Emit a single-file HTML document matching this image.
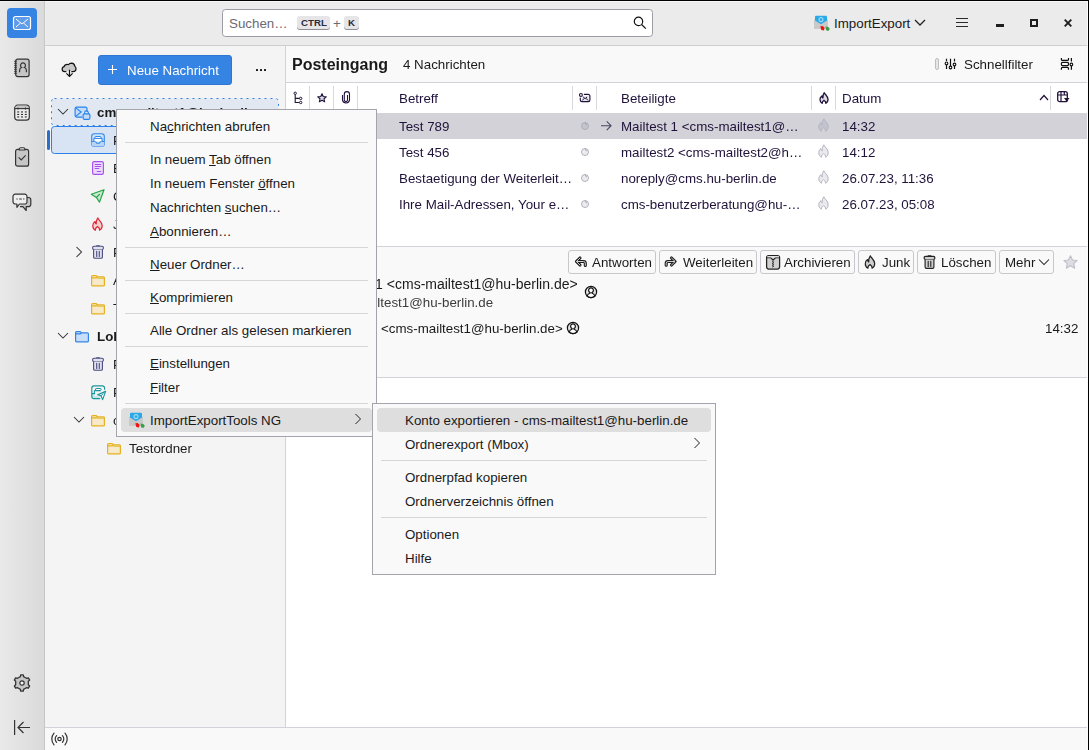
<!DOCTYPE html>
<html><head><meta charset="utf-8">
<style>
*{box-sizing:border-box;margin:0;padding:0}
html,body{width:1089px;height:750px;overflow:hidden;background:#fff}
body{position:relative;font-family:"Liberation Sans",sans-serif;font-size:13.333px;color:#1a1a1a}
.a{position:absolute}
.t{position:absolute;white-space:nowrap;line-height:20px;height:20px;will-change:transform}
.s{will-change:auto}
svg{position:absolute;overflow:visible}
.mi{color:#1a1a1a}
.mi u{text-decoration:underline;text-underline-offset:1px}
.btn{border:1px solid #c8c8cc;border-radius:3px;background:#f9f9f9}
</style></head><body>
<!-- top black line -->
<div class="a" style="left:0;top:0;width:1089px;height:1px;background:#000"></div>

<!-- spaces toolbar -->
<div class="a" id="spaces" style="left:0;top:1px;width:45px;height:749px;background:linear-gradient(to right,#e9e9e9,#dadada);border-right:1px solid #c6c6c6"></div>

<!-- titlebar -->
<div class="a" id="titlebar" style="left:45px;top:1px;width:1044px;height:45px;background:#ebebeb;border-bottom:1px solid #cfcfcf"></div>


<div class="a" style="left:45px;top:1px;width:1042px;height:1px;background:#f7f7f7"></div>
<div class="a" style="left:0;top:1px;width:44px;height:1px;background:rgba(255,255,255,0.35)"></div>
<div class="a" style="left:45px;top:2px;width:1px;height:43px;background:#efefef"></div>
<!-- spaces icons -->
<div class="a" style="left:7px;top:8px;width:30px;height:30px;background:#3584e4;border-radius:4px"></div>
<svg style="left:13px;top:16px" width="18" height="14" viewBox="0 0 18 14"><rect x="0.5" y="0.5" width="17" height="13" rx="2" fill="#5f9ce9" stroke="#fff" stroke-width="1.2"/><path d="M3 3 L9 8 L15 3 M3 11 L7.5 7 M15 11 L10.5 7" stroke="#fff" stroke-width="1" fill="none"/></svg>
<!-- address book -->
<svg style="left:14px;top:58px" width="16" height="20" viewBox="0 0 16 20"><rect x="1.7" y="1.2" width="13.4" height="17.4" rx="2" fill="#c6c6c6" stroke="#333" stroke-width="1.2"/><path d="M0.2 3.3h2.6M0.2 5.3h2.6M0.2 7.3h2.6M0.2 9.3h2.6M0.2 11.3h2.6M0.2 13.3h2.6M0.2 15.3h2.6" stroke="#333" stroke-width="1"/><path d="M5.6 14.3V12.4Q5.6 10.2 7.6 9.5A2.5 2.5 0 1 1 10.4 9.5Q12.4 10.2 12.4 12.4V14.3" fill="none" stroke="#333" stroke-width="1.2"/></svg>
<!-- calendar -->
<svg style="left:14px;top:104px" width="16" height="17" viewBox="0 0 16 17"><rect x="0.7" y="1.2" width="14.6" height="15" rx="3" fill="#ececec" stroke="#333" stroke-width="1.2"/><path d="M1.3 4.4V4a2.4 2.4 0 0 1 2.4-2.4h8.6A2.4 2.4 0 0 1 14.7 4v0.4z" fill="#c6c6c6"/><path d="M0.7 4.6h14.6" stroke="#333" stroke-width="1.1"/><path d="M4 3.6v2M11.5 3.6v2" stroke="#333" stroke-width="1.1"/><g fill="#333"><rect x="3.2" y="7.4" width="2" height="1.1"/><rect x="7" y="7.4" width="2" height="1.1"/><rect x="10.8" y="7.4" width="2" height="1.1"/><rect x="3.2" y="9.9" width="2" height="1.1"/><rect x="7" y="9.9" width="2" height="1.1"/><rect x="10.8" y="9.9" width="2" height="1.1"/><rect x="3.2" y="12.4" width="2" height="1.1"/><rect x="7" y="12.4" width="2" height="1.1"/><rect x="10.8" y="12.4" width="2" height="1.1"/></g></svg>
<!-- tasks -->
<svg style="left:15px;top:147px" width="14" height="20" viewBox="0 0 14 20"><rect x="0.6" y="2.4" width="13" height="16.8" rx="2" fill="#c6c6c6" stroke="#333" stroke-width="1.2"/><path d="M4.3 3V2.3a1.5 1.5 0 0 1 1.5-1.5h2.6a1.5 1.5 0 0 1 1.5 1.5V3z" fill="#e8e8e8" stroke="#333" stroke-width="1.1"/><path d="M3.6 10.3l2.6 2.6 4.4-4.6" fill="none" stroke="#333" stroke-width="1.1"/></svg>
<!-- chat -->
<svg style="left:12px;top:193px" width="20" height="20" viewBox="0 0 20 20"><path d="M11 4.5h5.5a2.3 2.3 0 0 1 2.3 2.3v4.6a2.3 2.3 0 0 1-2.3 2.3h-2.3v3.8l-3.3-3.8H8" fill="#c6c6c6" stroke="#333" stroke-width="1.2" stroke-linejoin="round"/><path d="M3.3 1.2h9.4a2.3 2.3 0 0 1 2.3 2.3v5.2a2.3 2.3 0 0 1-2.3 2.3H7.5L4.9 14.3V11H3.3A2.3 2.3 0 0 1 1 8.7V3.5A2.3 2.3 0 0 1 3.3 1.2z" fill="#efefef" stroke="#333" stroke-width="1.2" stroke-linejoin="round"/><path d="M4.4 6h1.2M7.2 6h2.6M11.2 6h1.2" stroke="#333" stroke-width="1"/></svg>
<!-- settings gear -->
<svg style="left:13px;top:674px" width="18" height="18" viewBox="0 0 18 18"><path d="M5.85 3.54 L7.40 2.60 L7.72 0.90 L10.28 0.90 L10.60 2.60 L12.15 3.54 L13.75 4.42 L15.37 3.84 L16.66 6.06 L15.34 7.18 L15.30 9.00 L15.34 10.82 L16.66 11.94 L15.37 14.16 L13.75 13.58 L12.15 14.46 L10.60 15.40 L10.28 17.10 L7.72 17.10 L7.40 15.40 L5.85 14.46 L4.25 13.58 L2.63 14.16 L1.34 11.94 L2.66 10.82 L2.70 9.00 L2.66 7.18 L1.34 6.06 L2.63 3.84 L4.25 4.42Z" fill="#c6c6c6" stroke="#333" stroke-width="1.3" stroke-linejoin="round"/><circle cx="9" cy="9" r="2.2" fill="#f4f4f4" stroke="#333" stroke-width="1.2"/></svg>
<!-- collapse -->
<svg style="left:14px;top:720px" width="16" height="15" viewBox="0 0 16 15"><path d="M0.6 0v15" stroke="#333" stroke-width="1.2"/><path d="M16 7.5H4M9.5 2L4 7.5 9.5 13" fill="none" stroke="#333" stroke-width="1.2"/></svg>

<!-- search box -->
<div class="a" style="left:222px;top:9px;width:431px;height:28px;background:#fff;border:1px solid #9c9ca6;border-radius:3.5px"></div>
<div class="t s" style="left:229px;top:14px;color:#6a6a72">Suchen…</div>
<div class="a" style="left:297px;top:16px;width:33px;height:13px;background:#e6e6e9;border-radius:3px;box-shadow:0 1px 0 #8e8e96"></div>
<div class="t s" style="left:301px;top:12.5px;font-size:9.7px;font-weight:bold;color:#2a2a3a">CTRL</div>
<div class="t s" style="left:333px;top:14px;color:#6a6a72">+</div>
<div class="a" style="left:344px;top:16px;width:15px;height:13px;background:#e6e6e9;border-radius:3px;box-shadow:0 1px 0 #8e8e96"></div>
<div class="t s" style="left:348px;top:12.5px;font-size:9.7px;font-weight:bold;color:#2a2a3a">K</div>
<svg style="left:633px;top:16px" width="14" height="14" viewBox="0 0 14 14"><circle cx="5.5" cy="5.4" r="4.2" fill="none" stroke="#111" stroke-width="1.2"/><path d="M8.6 8.5l4.2 4.2" stroke="#111" stroke-width="1.2"/></svg>

<!-- app menu / window buttons -->
<svg style="left:814px;top:15px" width="16" height="16" viewBox="0 0 16 16"><path d="M0 4.8L7 1.5 14 4.8V14H0z" fill="#c9c9c9"/><path d="M1 1.8Q1 0.8 2 0.8H12Q13 0.8 13 1.8V5.4L7 9.3 1 5.4z" fill="#2aa9e8"/><circle cx="7" cy="4.6" r="2" fill="none" stroke="#9fd9f6" stroke-width="1.1"/><path d="M6.3 11.2L8.6 10.9 10.5 12.8 10 15.6 7.3 15z" fill="#f21212"/><path d="M11.6 11.4L14.4 12 15.8 13.9 14.3 16 12 15.2z" fill="#3c9e45"/></svg>
<div class="t s" style="left:834px;top:14px;color:#1a1a1a">ImportExport</div>
<svg style="left:914px;top:19px" width="12" height="8" viewBox="0 0 12 8"><path d="M1 1l5 5 5-5" fill="none" stroke="#222" stroke-width="1.3"/></svg>
<svg style="left:956px;top:17px" width="12" height="11" viewBox="0 0 12 11"><path d="M0 1.5h12M0 5.5h12M0 9.5h12" stroke="#2a2a2a" stroke-width="1.1"/></svg>
<div class="a" style="left:996px;top:24px;width:8px;height:3px;background:#1e1e1e"></div>
<div class="a" style="left:1030px;top:19px;width:8px;height:8px;border:2px solid #1e1e1e"></div>
<svg style="left:1064px;top:19px" width="8" height="8" viewBox="0 0 8 8"><path d="M0.7 0.7l6.6 6.6M7.3 0.7l-6.6 6.6" stroke="#1e1e1e" stroke-width="1.9"/></svg>

<!-- folder pane -->
<div class="a" id="folderpane" style="left:45px;top:46px;width:241px;height:681px;background:#f4f4f4;border-right:1px solid #d2d2d8"></div>


<!-- folder pane header -->
<svg style="left:61px;top:62px" width="16" height="16" viewBox="0 0 16 16"><path d="M5.6 9.6H3.6Q1.1 9.6 1.1 7.1Q1.1 5.2 3 4.7Q3.8 2.2 6.4 2.3Q7 2.3 7.5 2.6Q8.6 1.1 10.5 1.1Q13.4 1.2 13.8 4.2Q15 5 15 6.8Q15 9.6 12.1 9.6H10.2" fill="#c8c8c8" stroke="#111" stroke-width="1.2" stroke-linejoin="round"/><path d="M5.6 9.6H10.2" stroke="#f3f3f3" stroke-width="1.3"/><path d="M8.5 7.8V14.3M5.4 11.3L8.5 14.4 11.6 11.3" fill="none" stroke="#111" stroke-width="1.2"/></svg>
<div class="a" style="left:98px;top:55px;width:134px;height:30px;background:#3584e4;border:1px solid #2f76d2;border-radius:3px"></div>
<svg style="left:108px;top:65px" width="9" height="9" viewBox="0 0 9 9"><path d="M4.5 0v9M0 4.5h9" stroke="#fff" stroke-width="1.1"/></svg>
<div class="t" style="left:127px;top:61px;color:#fff">Neue Nachricht</div>
<svg style="left:256px;top:69px" width="10" height="2" viewBox="0 0 10 2"><rect x="0" y="0" width="2" height="2" rx="0.5" fill="#111"/><rect x="4" y="0" width="2" height="2" rx="0.5" fill="#111"/><rect x="8" y="0" width="2" height="2" rx="0.5" fill="#111"/></svg>

<!-- account row -->
<svg style="left:51px;top:98px" width="228" height="28" viewBox="0 0 228 28"><rect x="0.5" y="0.5" width="227" height="27" rx="3" fill="#e2e8f2" stroke="#2c80ea" stroke-width="1" stroke-dasharray="2 4"/></svg>
<svg style="left:57px;top:108px" width="12" height="8" viewBox="0 0 12 8"><path d="M1 1l5 5 5-5" fill="none" stroke="#333" stroke-width="1.05"/></svg>
<svg style="left:74px;top:106px" width="17" height="14" viewBox="0 0 17 14"><path d="M13 6V2.6A1.5 1.5 0 0 0 11.5 1.1H2.6A1.5 1.5 0 0 0 1.1 2.6V9.6A1.5 1.5 0 0 0 2.6 11.1H8.5V6z" fill="#c4dcf8"/><path d="M13 6V2.6A1.5 1.5 0 0 0 11.5 1.1H2.6A1.5 1.5 0 0 0 1.1 2.6V9.6A1.5 1.5 0 0 0 2.6 11.1H8.3" fill="none" stroke="#2382ee" stroke-width="1.15"/><path d="M1.6 1.8L7.2 6 1.6 10.3" fill="none" stroke="#2382ee" stroke-width="1.05"/><rect x="9.1" y="7.9" width="6.8" height="5.4" rx="1.2" fill="#c4dcf8" stroke="#2382ee" stroke-width="1.15"/><path d="M10.7 7.9V6.6A1.8 1.8 0 0 1 14.3 6.6V7.9" fill="none" stroke="#2382ee" stroke-width="1.1"/></svg>
<div class="t" style="left:97px;top:103px;width:173px;overflow:hidden;text-overflow:ellipsis;font-weight:bold;color:#1a1a1a">cms-mailtest1@hu-berlin.de</div>

<!-- inbox row selected -->
<div class="a" style="left:51px;top:126px;width:228px;height:28px;background:#d8e4f3;border:1px solid #2c80ea;border-radius:3.5px"></div>
<div class="a" style="left:47px;top:130px;width:3px;height:20px;background:#2a6fcc;border-radius:1.5px"></div>
<svg style="left:91px;top:133px" width="14" height="14" viewBox="0 0 14 14"><rect x="0.7" y="0.7" width="12.6" height="12.6" rx="2.6" fill="#cfe2f8" stroke="#2f88ea" stroke-width="1.1"/><path d="M0.7 8.5H4.3L5.8 10.2H8.2L9.7 8.5H13.3V10.7A2.6 2.6 0 0 1 10.7 13.3H3.3A2.6 2.6 0 0 1 0.7 10.7z" fill="#b9d5f5"/><path d="M0.7 8.5H4.3L5.8 10.2H8.2L9.7 8.5H13.3" fill="none" stroke="#2f88ea" stroke-width="1.1" stroke-linejoin="round"/><path d="M2.9 8.3V5.9Q2.9 5.4 3.5 5.4H10.5Q11.1 5.4 11.1 5.9V8.3" fill="#fff" stroke="#2f88ea" stroke-width="1.1"/><rect x="4" y="3.5" width="6" height="1.9" rx="0.6" fill="#fff" stroke="#2f88ea" stroke-width="1"/></svg>
<div class="t" style="left:113px;top:131px">Posteingang</div>

<!-- drafts -->
<svg style="left:92px;top:161px" width="12" height="14" viewBox="0 0 12 14"><rect x="0.6" y="0.6" width="10.8" height="12.8" rx="1.6" fill="#eadcfa" stroke="#a64ef2" stroke-width="1.15"/><path d="M3.2 3.5h5.6M3.2 5.5h5.6M3.2 7.5h3.6M5.2 10.5h3.6" stroke="#a64ef2" stroke-width="1" stroke-linecap="round"/></svg>
<div class="t" style="left:113px;top:159px">Entwürfe</div>
<!-- sent -->
<svg style="left:90px;top:188px" width="16" height="16" viewBox="0 0 16 16"><path d="M1.3 6.3L14 1.7 9.5 14.1 6.4 9.5z" fill="#c9e8cf" stroke="#22a447" stroke-width="1.2" stroke-linejoin="round"/><path d="M6.4 9.5L9.5 6.3" stroke="#22a447" stroke-width="1.1" stroke-linecap="round"/></svg>
<div class="t" style="left:113px;top:187px">Gesendet</div>
<!-- junk -->
<svg style="left:92px;top:217px" width="11" height="14" viewBox="0 0 11 14"><path d="M5.8 0.8C6.5 3 10.2 4.8 10.2 8.6C10.2 11 9 12.6 7.6 13.2C7.8 11.5 6.8 10.4 5.5 9.6C4.2 10.4 3.2 11.5 3.4 13.2C2 12.6 0.8 11 0.8 8.8C0.8 6.8 1.8 5.4 3 4.6C3 6 3.5 6.6 4.2 7C4 4.5 4.6 2.5 5.8 0.8Z" fill="#f4cfd2" stroke="#e0222e" stroke-width="1.15" stroke-linejoin="round"/></svg>
<div class="t" style="left:113px;top:215px">Junk</div>
<!-- trash with twisty -->
<svg style="left:75px;top:246px" width="8" height="12" viewBox="0 0 8 12"><path d="M1.5 1l5 5-5 5" fill="none" stroke="#333" stroke-width="1.05"/></svg>
<svg style="left:92px;top:245px" width="12" height="14" viewBox="0 0 12 14"><rect x="1.1" y="0.3" width="3.8" height="1" rx="0.5" fill="#4a4a80" transform="translate(3 0)"/><rect x="0.6" y="1.3" width="10.8" height="3.2" rx="1.4" fill="#e2e2ee" stroke="#4a4a80" stroke-width="1.1"/><path d="M1.6 4.6V12a1.3 1.3 0 0 0 1.3 1.3h6.2a1.3 1.3 0 0 0 1.3-1.3V4.6" fill="#e2e2ee" stroke="#4a4a80" stroke-width="1.1"/><path d="M4.7 6.3v5.2M7.3 6.3v5.2" stroke="#4a4a80" stroke-width="1.1" stroke-linecap="round"/></svg>
<div class="t" style="left:113px;top:243px">Papierkorb</div>
<!-- archive folder -->
<svg style="left:91px;top:275px" width="14" height="11" viewBox="0 0 14 11"><path d="M0.6 1.6a1 1 0 0 1 1-1h3.6l1.2 1.2h6a1 1 0 0 1 1 1v7.1a1 1 0 0 1-1 1H1.6a1 1 0 0 1-1-1z" fill="#f6eacb" stroke="#e6b01e" stroke-width="1.2"/><path d="M0.6 2.9h4.8l1.1-1.1" fill="none" stroke="#e6b01e" stroke-width="1.1"/><path d="M6.5 3.3h6.9" stroke="#e6b01e" stroke-width="0.8"/></svg>
<div class="t" style="left:113px;top:271px">Archiv</div>
<svg style="left:91px;top:303px" width="14" height="11" viewBox="0 0 14 11"><path d="M0.6 1.6a1 1 0 0 1 1-1h3.6l1.2 1.2h6a1 1 0 0 1 1 1v7.1a1 1 0 0 1-1 1H1.6a1 1 0 0 1-1-1z" fill="#f6eacb" stroke="#e6b01e" stroke-width="1.2"/><path d="M0.6 2.9h4.8l1.1-1.1" fill="none" stroke="#e6b01e" stroke-width="1.1"/><path d="M6.5 3.3h6.9" stroke="#e6b01e" stroke-width="0.8"/></svg>
<div class="t" style="left:113px;top:299px">Test</div>
<!-- local folders -->
<svg style="left:57px;top:332px" width="12" height="8" viewBox="0 0 12 8"><path d="M1 1l5 5 5-5" fill="none" stroke="#333" stroke-width="1.05"/></svg>
<svg style="left:75px;top:331px" width="14" height="11" viewBox="0 0 14 11"><path d="M0.6 1.6a1 1 0 0 1 1-1h3.6l1.2 1.2h6a1 1 0 0 1 1 1v7.1a1 1 0 0 1-1 1H1.6a1 1 0 0 1-1-1z" fill="#c8def8" stroke="#3584e4" stroke-width="1.2"/><path d="M0.6 2.9h4.8l1.1-1.1" fill="none" stroke="#3584e4" stroke-width="1.1"/></svg>
<div class="t" style="left:97px;top:327px;font-weight:bold">Lokale Ordner</div>
<svg style="left:92px;top:357px" width="12" height="14" viewBox="0 0 12 14"><rect x="1.1" y="0.3" width="3.8" height="1" rx="0.5" fill="#4a4a80" transform="translate(3 0)"/><rect x="0.6" y="1.3" width="10.8" height="3.2" rx="1.4" fill="#e2e2ee" stroke="#4a4a80" stroke-width="1.1"/><path d="M1.6 4.6V12a1.3 1.3 0 0 0 1.3 1.3h6.2a1.3 1.3 0 0 0 1.3-1.3V4.6" fill="#e2e2ee" stroke="#4a4a80" stroke-width="1.1"/><path d="M4.7 6.3v5.2M7.3 6.3v5.2" stroke="#4a4a80" stroke-width="1.1" stroke-linecap="round"/></svg>
<div class="t" style="left:113px;top:355px">Papierkorb</div>
<svg style="left:91px;top:385px" width="16" height="16" viewBox="0 0 16 16"><path d="M0.8 8.6H3.6V11H8.5L9.5 13.6H3A2.2 2.2 0 0 1 0.8 11.4z" fill="#c8e8ea"/><path d="M13.6 4.7V3A2.2 2.2 0 0 0 11.4 0.8H3A2.2 2.2 0 0 0 0.8 3V11.4A2.2 2.2 0 0 0 3 13.6H9.2" fill="none" stroke="#1a939c" stroke-width="1.15"/><path d="M0.8 8.6H3.4V6.1Q3.4 5.6 4 5.6H9.6" fill="none" stroke="#1a939c" stroke-width="1.1"/><rect x="4.6" y="3.5" width="5.4" height="2" rx="0.5" fill="#fff" stroke="#1a939c" stroke-width="1"/><path d="M14.6 6.4L6.6 9.8 10 10.6 11.6 14.6z" fill="#fff" stroke="#1a939c" stroke-width="1.15" stroke-linejoin="round"/><path d="M10 10.6L12.2 8.7" stroke="#1a939c" stroke-width="1" stroke-linecap="round"/></svg>
<div class="t" style="left:113px;top:383px">Postausgang</div>
<svg style="left:73px;top:416px" width="12" height="8" viewBox="0 0 12 8"><path d="M1 1l5 5 5-5" fill="none" stroke="#333" stroke-width="1.05"/></svg>
<svg style="left:91px;top:415px" width="14" height="11" viewBox="0 0 14 11"><path d="M0.6 1.6a1 1 0 0 1 1-1h3.6l1.2 1.2h6a1 1 0 0 1 1 1v7.1a1 1 0 0 1-1 1H1.6a1 1 0 0 1-1-1z" fill="#f6eacb" stroke="#e6b01e" stroke-width="1.2"/><path d="M0.6 2.9h4.8l1.1-1.1" fill="none" stroke="#e6b01e" stroke-width="1.1"/><path d="M6.5 3.3h6.9" stroke="#e6b01e" stroke-width="0.8"/></svg>
<div class="t" style="left:113px;top:411px">ordner</div>
<svg style="left:107px;top:443px" width="14" height="11" viewBox="0 0 14 11"><path d="M0.6 1.6a1 1 0 0 1 1-1h3.6l1.2 1.2h6a1 1 0 0 1 1 1v7.1a1 1 0 0 1-1 1H1.6a1 1 0 0 1-1-1z" fill="#f6eacb" stroke="#e6b01e" stroke-width="1.2"/><path d="M0.6 2.9h4.8l1.1-1.1" fill="none" stroke="#e6b01e" stroke-width="1.1"/><path d="M6.5 3.3h6.9" stroke="#e6b01e" stroke-width="0.8"/></svg>
<div class="t" style="left:129px;top:439px">Testordner</div>

<!-- message list header -->
<div class="a" style="left:286px;top:46px;width:802px;height:37px;background:#f9f9f9;border-bottom:1px solid #d2d2d8"></div>
<!-- column header + rows -->
<div class="a" style="left:286px;top:83px;width:802px;height:163px;background:#fff"></div>
<div class="a" style="left:286px;top:246px;width:802px;height:1px;background:#d2d2d8"></div>

<!-- message list header content -->
<div class="t" style="left:292px;top:55px;font-size:16px;font-weight:bold;color:#1a1a1a">Posteingang</div>
<div class="t" style="left:403px;top:55px;color:#1a1a1a">4 Nachrichten</div>
<div class="a" style="left:935px;top:58px;width:4px;height:12px;border:1px solid #bdbdbd;border-radius:2px;background:#e6e6e6"></div>
<svg style="left:944px;top:57px" width="13" height="13" viewBox="0 0 13 13"><path d="M2.5 1.8v2.2M2.5 7.7v4.3M6.5 1.8v7.3M10.5 1.8v2.6M10.5 8.7v3.3" stroke="#111" stroke-width="1.2"/><circle cx="2.5" cy="6.4" r="1.35" fill="#f9f9f9" stroke="#111" stroke-width="1.1"/><circle cx="6.5" cy="10.5" r="1.35" fill="#f9f9f9" stroke="#111" stroke-width="1.1"/><circle cx="10.5" cy="7.5" r="1.35" fill="#f9f9f9" stroke="#111" stroke-width="1.1"/></svg>
<div class="t" style="left:964px;top:55px;color:#1a1a1a">Schnellfilter</div>
<svg style="left:1060px;top:57px" width="14" height="14" viewBox="0 0 14 14"><path d="M1.4 1.1v1.3a1 1 0 0 0 1 1h5.1a1 1 0 0 0 1-1V1.1M1.4 12.7v-1.3a1 1 0 0 1 1-1h5.1a1 1 0 0 1 1 1v1.3" fill="none" stroke="#111" stroke-width="1.2"/><rect x="1.4" y="5.4" width="7.1" height="3.2" rx="1" fill="none" stroke="#111" stroke-width="1.2"/><path d="M11.4 1.1v3.3M11.4 8.9v3.8" stroke="#111" stroke-width="1.2"/><circle cx="11.4" cy="7.5" r="1.35" fill="#f9f9f9" stroke="#111" stroke-width="1.1"/></svg>

<!-- column header -->
<svg style="left:293px;top:91px" width="10" height="13" viewBox="0 0 10 13"><path d="M2.2 3.5V11.5H6.5M2.2 7.4H6.5" fill="none" stroke="#20123a" stroke-width="1.1"/><circle cx="2.2" cy="2.3" r="1.2" fill="#fff" stroke="#20123a" stroke-width="1"/><circle cx="7.7" cy="7.4" r="1.2" fill="#fff" stroke="#20123a" stroke-width="1"/><circle cx="7.7" cy="11.5" r="1.2" fill="#fff" stroke="#20123a" stroke-width="1"/></svg>
<div class="a" style="left:309px;top:86px;width:1px;height:24px;background:#d8d8de"></div>
<svg style="left:317px;top:92.5px" width="10" height="10" viewBox="0 0 12 12"><path d="M6 0.8l1.5 3.3 3.6 0.4-2.7 2.4 0.8 3.6L6 8.7 2.8 10.5l0.8-3.6L0.9 4.5l3.6-0.4z" fill="#d8d8e0" stroke="#20123a" stroke-width="1.3" stroke-linejoin="round"/></svg>
<div class="a" style="left:333px;top:86px;width:1px;height:24px;background:#d8d8de"></div>
<svg style="left:342px;top:91px" width="8" height="13" viewBox="0 0 8 13"><path d="M5.5 4v5a1.6 1.6 0 0 1-3.2 0V3.2a2.6 2.6 0 0 1 5.2 0v6a3.6 3.6 0 0 1-7 0V4" fill="none" stroke="#20123a" stroke-width="1.1"/></svg>
<div class="a" style="left:357px;top:86px;width:1px;height:24px;background:#d8d8de"></div>
<div class="t" style="left:399px;top:89px;color:#20123a">Betreff</div>
<div class="a" style="left:572px;top:86px;width:1px;height:24px;background:#d8d8de"></div>
<svg style="left:579px;top:92px" width="12" height="11" viewBox="0 0 12 11"><path d="M3 4.2h6.8v4.6H3z" fill="#e4e4ea"/><path d="M5.3 2.3H9.2A1.7 1.7 0 0 1 10.9 4V7.9A1.7 1.7 0 0 1 9.2 9.6H3A1.7 1.7 0 0 1 1.3 7.9V6" fill="none" stroke="#20123a" stroke-width="1.15" stroke-linecap="round"/><circle cx="1.9" cy="2.9" r="1.45" fill="#fff" stroke="#20123a" stroke-width="1.1"/><path d="M3.5 8.2L5 6.6M8.8 8.2L7.3 6.6M4.4 5.2L6.1 6.6 7.8 5.2" fill="none" stroke="#20123a" stroke-width="1" stroke-linecap="round"/></svg>
<div class="a" style="left:596px;top:86px;width:1px;height:24px;background:#d8d8de"></div>
<div class="t" style="left:621px;top:89px;color:#20123a">Beteiligte</div>
<div class="a" style="left:811px;top:86px;width:1px;height:24px;background:#d8d8de"></div>
<svg style="left:819px;top:92px" width="10" height="12" viewBox="0 0 11 14"><path d="M5.8 0.8C6.5 3 10.2 4.8 10.2 8.6C10.2 11 9 12.6 7.6 13.2C7.8 11.5 6.8 10.4 5.5 9.6C4.2 10.4 3.2 11.5 3.4 13.2C2 12.6 0.8 11 0.8 8.8C0.8 6.8 1.8 5.4 3 4.6C3 6 3.5 6.6 4.2 7C4 4.5 4.6 2.5 5.8 0.8Z" fill="#dcdce2" stroke="#20123a" stroke-width="1.5" stroke-linejoin="round"/></svg>
<div class="a" style="left:835px;top:86px;width:1px;height:24px;background:#d8d8de"></div>
<div class="t" style="left:842px;top:89px;color:#20123a">Datum</div>
<svg style="left:1039px;top:94px" width="10" height="7" viewBox="0 0 10 7"><path d="M1 6l4-4.5 4 4.5" fill="none" stroke="#20123a" stroke-width="1.2"/></svg>
<div class="a" style="left:1050px;top:86px;width:1px;height:24px;background:#d8d8de"></div>
<svg style="left:1057px;top:91px" width="13" height="12" viewBox="0 0 13 12"><rect x="0.7" y="0.7" width="9.6" height="10" rx="2" fill="none" stroke="#20123a" stroke-width="1.3"/><path d="M0.7 4h9.6M4 0.7v10M7.3 0.7v3.3" stroke="#20123a" stroke-width="1.2"/><path d="M7 7h5.5l-2.75 3.8z" fill="#20123a"/></svg>

<!-- rows -->
<div class="a" style="left:286px;top:113px;width:802px;height:26px;background:#d2d2d8"></div>
<div class="t" style="left:399px;top:117px;color:#20123a">Test 789</div>
<svg style="left:581px;top:122px" width="8" height="8" viewBox="0 0 8 8"><circle cx="4" cy="4" r="3.5" fill="rgba(120,120,150,0.14)" stroke="#aaaab6" stroke-width="0.9"/><path d="M4 0.8Q5.3 1.5 5.4 3.2" stroke="#9a9aa6" stroke-width="0.9" fill="none"/></svg>
<svg style="left:601px;top:121px" width="11" height="10" viewBox="0 0 11 10"><path d="M0 4.7h10M5.7 0.3L10.1 4.7 5.7 9.1" fill="none" stroke="#4a4a62" stroke-width="1.1"/></svg>
<div class="t" style="left:621px;top:117px;color:#20123a">Mailtest 1 &lt;cms-mailtest1@…</div>
<svg style="left:818px;top:118px" width="11" height="14" viewBox="0 0 11 14"><path d="M5.8 0.8C6.5 3 10.2 4.8 10.2 8.6C10.2 11 9 12.6 7.6 13.2C7.8 11.5 6.8 10.4 5.5 9.6C4.2 10.4 3.2 11.5 3.4 13.2C2 12.6 0.8 11 0.8 8.8C0.8 6.8 1.8 5.4 3 4.6C3 6 3.5 6.6 4.2 7C4 4.5 4.6 2.5 5.8 0.8Z" fill="rgba(120,120,150,0.16)" stroke="#b4b4c0" stroke-width="1" stroke-linejoin="round"/></svg>
<div class="t" style="left:842px;top:117px;color:#20123a">14:32</div>
<div class="t" style="left:399px;top:143px;color:#20123a">Test 456</div>
<svg style="left:581px;top:148px" width="8" height="8" viewBox="0 0 8 8"><circle cx="4" cy="4" r="3.5" fill="rgba(120,120,150,0.14)" stroke="#aaaab6" stroke-width="0.9"/><path d="M4 0.8Q5.3 1.5 5.4 3.2" stroke="#9a9aa6" stroke-width="0.9" fill="none"/></svg>
<div class="t" style="left:621px;top:143px;color:#20123a">mailtest2 &lt;cms-mailtest2@h…</div>
<svg style="left:818px;top:144px" width="11" height="14" viewBox="0 0 11 14"><path d="M5.8 0.8C6.5 3 10.2 4.8 10.2 8.6C10.2 11 9 12.6 7.6 13.2C7.8 11.5 6.8 10.4 5.5 9.6C4.2 10.4 3.2 11.5 3.4 13.2C2 12.6 0.8 11 0.8 8.8C0.8 6.8 1.8 5.4 3 4.6C3 6 3.5 6.6 4.2 7C4 4.5 4.6 2.5 5.8 0.8Z" fill="rgba(120,120,150,0.16)" stroke="#b4b4c0" stroke-width="1" stroke-linejoin="round"/></svg>
<div class="t" style="left:842px;top:143px;color:#20123a">14:12</div>
<div class="t" style="left:399px;top:169px;color:#20123a">Bestaetigung der Weiterleit…</div>
<svg style="left:581px;top:174px" width="8" height="8" viewBox="0 0 8 8"><circle cx="4" cy="4" r="3.5" fill="rgba(120,120,150,0.14)" stroke="#aaaab6" stroke-width="0.9"/><path d="M4 0.8Q5.3 1.5 5.4 3.2" stroke="#9a9aa6" stroke-width="0.9" fill="none"/></svg>
<div class="t" style="left:621px;top:169px;color:#20123a">noreply@cms.hu-berlin.de</div>
<svg style="left:818px;top:170px" width="11" height="14" viewBox="0 0 11 14"><path d="M5.8 0.8C6.5 3 10.2 4.8 10.2 8.6C10.2 11 9 12.6 7.6 13.2C7.8 11.5 6.8 10.4 5.5 9.6C4.2 10.4 3.2 11.5 3.4 13.2C2 12.6 0.8 11 0.8 8.8C0.8 6.8 1.8 5.4 3 4.6C3 6 3.5 6.6 4.2 7C4 4.5 4.6 2.5 5.8 0.8Z" fill="rgba(120,120,150,0.16)" stroke="#b4b4c0" stroke-width="1" stroke-linejoin="round"/></svg>
<div class="t" style="left:842px;top:169px;color:#20123a">26.07.23, 11:36</div>
<div class="t" style="left:399px;top:195px;color:#20123a">Ihre Mail-Adressen, Your e…</div>
<svg style="left:581px;top:200px" width="8" height="8" viewBox="0 0 8 8"><circle cx="4" cy="4" r="3.5" fill="rgba(120,120,150,0.14)" stroke="#aaaab6" stroke-width="0.9"/><path d="M4 0.8Q5.3 1.5 5.4 3.2" stroke="#9a9aa6" stroke-width="0.9" fill="none"/></svg>
<div class="t" style="left:621px;top:195px;color:#20123a">cms-benutzerberatung@hu-…</div>
<svg style="left:818px;top:196px" width="11" height="14" viewBox="0 0 11 14"><path d="M5.8 0.8C6.5 3 10.2 4.8 10.2 8.6C10.2 11 9 12.6 7.6 13.2C7.8 11.5 6.8 10.4 5.5 9.6C4.2 10.4 3.2 11.5 3.4 13.2C2 12.6 0.8 11 0.8 8.8C0.8 6.8 1.8 5.4 3 4.6C3 6 3.5 6.6 4.2 7C4 4.5 4.6 2.5 5.8 0.8Z" fill="rgba(120,120,150,0.16)" stroke="#b4b4c0" stroke-width="1" stroke-linejoin="round"/></svg>
<div class="t" style="left:842px;top:195px;color:#20123a">26.07.23, 05:08</div>

<!-- message header pane -->
<div class="a" style="left:286px;top:247px;width:802px;height:131px;background:#f9f9f9;border-bottom:1px solid #d2d2d8"></div>
<!-- status bar -->
<div class="a" style="left:45px;top:727px;width:1044px;height:23px;background:#f9f9f9;border-top:1px solid #d2d2d8"></div>

<!-- header buttons -->
<div class="a btn" style="left:568px;top:250px;width:88px;height:24px"></div>
<svg style="left:574px;top:255px" width="14" height="13" viewBox="0 0 14 13"><g fill="none" stroke-linecap="round" stroke-linejoin="round"><path d="M6 3L2.4 6.5 6 10M3 6.5H9.5Q11.3 6.5 11.3 8.3V10.4" stroke="#1c1c1c" stroke-width="3.1"/><path d="M6 3L2.4 6.5 6 10M3 6.5H9.5Q11.3 6.5 11.3 8.3V10.4" stroke="#d2d2d2" stroke-width="1"/></g></svg>
<div class="t" style="left:592px;top:253px">Antworten</div>
<div class="a btn" style="left:659px;top:250px;width:98px;height:24px"></div>
<svg style="left:663px;top:255px" width="14" height="13" viewBox="0 0 14 13"><g fill="none" stroke-linecap="round" stroke-linejoin="round"><path d="M8.5 3L12.1 6.5 8.5 10M11.5 6.5H5Q3.2 6.5 3.2 8.3V10.2" stroke="#1c1c1c" stroke-width="3.1"/><path d="M8.5 3L12.1 6.5 8.5 10M11.5 6.5H5Q3.2 6.5 3.2 8.3V10.2" stroke="#d2d2d2" stroke-width="1"/></g></svg>
<div class="t" style="left:683px;top:253px">Weiterleiten</div>
<div class="a btn" style="left:760px;top:250px;width:95px;height:24px"></div>
<svg style="left:765px;top:254px" width="16" height="16" viewBox="0 0 16 16"><rect x="1.6" y="1.6" width="13" height="13.4" rx="2.2" fill="#d0d0d0" stroke="#222" stroke-width="1.25"/><path d="M1.6 3.6H5.5L8.1 6.2 10.7 3.6H14.6" fill="none" stroke="#222" stroke-width="1.1"/><path d="M2.2 2.2h11.8v1.2H2.2z" fill="#f4f4f4"/><path d="M7.2 7.2l1.6 1-1.6 1 1.6 1-1.6 1 1.6 1-1.6 1" fill="none" stroke="#222" stroke-width="0.9"/></svg>
<div class="t" style="left:784px;top:253px">Archivieren</div>
<div class="a btn" style="left:858px;top:250px;width:56px;height:24px"></div>
<svg style="left:864px;top:255px" width="12" height="14" viewBox="0 0 11 14"><path d="M5.8 0.8C6.5 3 10.2 4.8 10.2 8.6C10.2 11 9 12.6 7.6 13.2C7.8 11.5 6.8 10.4 5.5 9.6C4.2 10.4 3.2 11.5 3.4 13.2C2 12.6 0.8 11 0.8 8.8C0.8 6.8 1.8 5.4 3 4.6C3 6 3.5 6.6 4.2 7C4 4.5 4.6 2.5 5.8 0.8Z" fill="#cfcfcf" stroke="#222" stroke-width="1.2" stroke-linejoin="round"/></svg>
<div class="t" style="left:882px;top:253px">Junk</div>
<div class="a btn" style="left:917px;top:250px;width:79px;height:24px"></div>
<svg style="left:923px;top:255px" width="13" height="14" viewBox="0 0 12 14"><rect x="4.1" y="0.2" width="3.8" height="1.1" rx="0.5" fill="#222"/><rect x="0.6" y="1.3" width="10.8" height="3.2" rx="1.4" fill="#d0d0d0" stroke="#222" stroke-width="1.15"/><path d="M1.6 4.6V12a1.3 1.3 0 0 0 1.3 1.3h6.2a1.3 1.3 0 0 0 1.3-1.3V4.6" fill="#d0d0d0" stroke="#222" stroke-width="1.15"/><path d="M4.7 6.3v5.2M7.3 6.3v5.2" stroke="#222" stroke-width="1.1" stroke-linecap="round"/></svg>
<div class="t" style="left:941px;top:253px">Löschen</div>
<div class="a btn" style="left:999px;top:250px;width:55px;height:24px"></div>
<div class="t" style="left:1005px;top:253px">Mehr</div>
<svg style="left:1038px;top:258px" width="12" height="8" viewBox="0 0 12 8"><path d="M1 1.5l5 5 5-5" fill="none" stroke="#222" stroke-width="1.05"/></svg>
<svg style="left:1063px;top:255px" width="15" height="14" viewBox="0 0 15 14"><path d="M7.5 0.8l2 4.2 4.6 0.5-3.4 3.1 1 4.6-4.2-2.4-4.2 2.4 1-4.6L0.9 5.5l4.6-0.5z" fill="#dcdce2" stroke="#c0c0c8" stroke-width="1.1" stroke-linejoin="round"/></svg>

<!-- header fields -->
<div class="t" style="left:322.6px;top:274px;font-size:14px;color:#1a1a1a">Mailtest 1 &lt;cms-mailtest1@hu-berlin.de&gt;</div>
<svg style="left:584px;top:285px" width="14" height="14" viewBox="0 0 14 14"><circle cx="7" cy="7" r="5.6" fill="#e2e2e2" stroke="#111" stroke-width="1.2"/><path d="M3.1 11Q3.9 8.6 6 8.3L6.2 7.6A2.4 2.4 0 1 1 7.8 7.6L8 8.3Q10.1 8.6 10.9 11A5.6 5.6 0 0 1 3.1 11z" fill="#fff" stroke="#111" stroke-width="1.15" stroke-linejoin="round"/></svg>
<div class="t" style="left:327.2px;top:293px;color:#3c3c3c">cms-mailtest1@hu-berlin.de</div>
<div class="t" style="left:380.7px;top:319px;color:#1a1a1a">&lt;cms-mailtest1@hu-berlin.de&gt;</div>
<svg style="left:566px;top:321px" width="14" height="14" viewBox="0 0 14 14"><circle cx="7" cy="7" r="5.6" fill="#e2e2e2" stroke="#111" stroke-width="1.2"/><path d="M3.1 11Q3.9 8.6 6 8.3L6.2 7.6A2.4 2.4 0 1 1 7.8 7.6L8 8.3Q10.1 8.6 10.9 11A5.6 5.6 0 0 1 3.1 11z" fill="#fff" stroke="#111" stroke-width="1.15" stroke-linejoin="round"/></svg>
<div class="t" style="left:1045px;top:319px;color:#1a1a1a">14:32</div>

<!-- status bar icon -->
<svg style="left:51px;top:732px" width="17" height="14" viewBox="0 0 17 14"><path d="M3 1.2Q0.8 3.8 0.8 7T3 12.8M14 1.2Q16.2 3.8 16.2 7T14 12.8M5.6 3.6Q4.2 5 4.2 7T5.6 10.4M11.4 3.6Q12.8 5 12.8 7T11.4 10.4" fill="none" stroke="#333" stroke-width="1.2" stroke-linecap="round"/><circle cx="8.5" cy="7" r="1.7" fill="none" stroke="#333" stroke-width="1.2"/></svg>

<!-- right window border -->
<div class="a" style="left:1087px;top:1px;width:1px;height:749px;background:#fcfcfc"></div><div class="a" style="left:1088px;top:0;width:1px;height:750px;background:#000"></div>

<!-- menus -->
<div class="a" style="left:116px;top:109px;width:261px;height:328px;background:#f9f9f9;border:1px solid #a4a4ac"></div>
<div class="t mi s" style="left:150px;top:117px">Na<u>c</u>hrichten abrufen</div>
<div class="t mi s" style="left:150px;top:150px">In neuem <u>T</u>ab öffnen</div>
<div class="t mi s" style="left:150px;top:174px">In neuem Fenster <u>ö</u>ffnen</div>
<div class="t mi s" style="left:150px;top:198px">Nachrichten <u>s</u>uchen…</div>
<div class="t mi s" style="left:150px;top:222px"><u>A</u>bonnieren…</div>
<div class="t mi s" style="left:150px;top:255px"><u>N</u>euer Ordner…</div>
<div class="t mi s" style="left:150px;top:288px"><u>K</u>omprimieren</div>
<div class="t mi s" style="left:150px;top:321px">Alle Ordner als gelesen markieren</div>
<div class="t mi s" style="left:150px;top:354px"><u>E</u>instellungen</div>
<div class="t mi s" style="left:150px;top:378px"><u>F</u>ilter</div>
<div class="a" style="left:125px;top:142px;width:243px;height:1px;background:#d6d6d6"></div>
<div class="a" style="left:125px;top:247px;width:243px;height:1px;background:#d6d6d6"></div>
<div class="a" style="left:125px;top:280px;width:243px;height:1px;background:#d6d6d6"></div>
<div class="a" style="left:125px;top:313px;width:243px;height:1px;background:#d6d6d6"></div>
<div class="a" style="left:125px;top:346px;width:243px;height:1px;background:#d6d6d6"></div>
<div class="a" style="left:125px;top:403px;width:243px;height:1px;background:#d6d6d6"></div>
<div class="a" style="left:121px;top:408px;width:251px;height:24px;background:#dedede;border-radius:4px"></div>
<svg style="left:129px;top:412px" width="16" height="16" viewBox="0 0 16 16"><path d="M0 4.8L7 1.5 14 4.8V14H0z" fill="#c9c9c9"/><path d="M1 1.8Q1 0.8 2 0.8H12Q13 0.8 13 1.8V5.4L7 9.3 1 5.4z" fill="#2aa9e8"/><circle cx="7" cy="4.6" r="2" fill="none" stroke="#9fd9f6" stroke-width="1.1"/><path d="M6.3 11.2L8.6 10.9 10.5 12.8 10 15.6 7.3 15z" fill="#f21212"/><path d="M11.6 11.4L14.4 12 15.8 13.9 14.3 16 12 15.2z" fill="#3c9e45"/></svg>
<div class="t mi s" style="left:150px;top:411px">ImportExportTools NG</div>
<svg style="left:354px;top:413px" width="8" height="12" viewBox="0 0 8 12"><path d="M1.5 1l5 5-5 5" fill="none" stroke="#222" stroke-width="1"/></svg>
<div class="a" style="left:372px;top:403px;width:344px;height:172px;background:#f9f9f9;border:1px solid #a4a4ac"></div>
<div class="a" style="left:377px;top:408px;width:334px;height:24px;background:#dedede;border-radius:4px"></div>
<div class="t mi s" style="left:405px;top:411px">Konto exportieren - cms-mailtest1@hu-berlin.de</div>
<div class="t mi s" style="left:405px;top:435px">Ordnerexport (Mbox)</div>
<div class="t mi s" style="left:405px;top:468px">Ordnerpfad kopieren</div>
<div class="t mi s" style="left:405px;top:492px">Ordnerverzeichnis öffnen</div>
<div class="t mi s" style="left:405px;top:525px">Optionen</div>
<div class="t mi s" style="left:405px;top:549px">Hilfe</div>
<svg style="left:693px;top:437px" width="8" height="12" viewBox="0 0 8 12"><path d="M1.5 1l5 5-5 5" fill="none" stroke="#222" stroke-width="1"/></svg>
<div class="a" style="left:381px;top:460px;width:326px;height:1px;background:#d6d6d6"></div>
<div class="a" style="left:381px;top:517px;width:326px;height:1px;background:#d6d6d6"></div>
</body></html>
